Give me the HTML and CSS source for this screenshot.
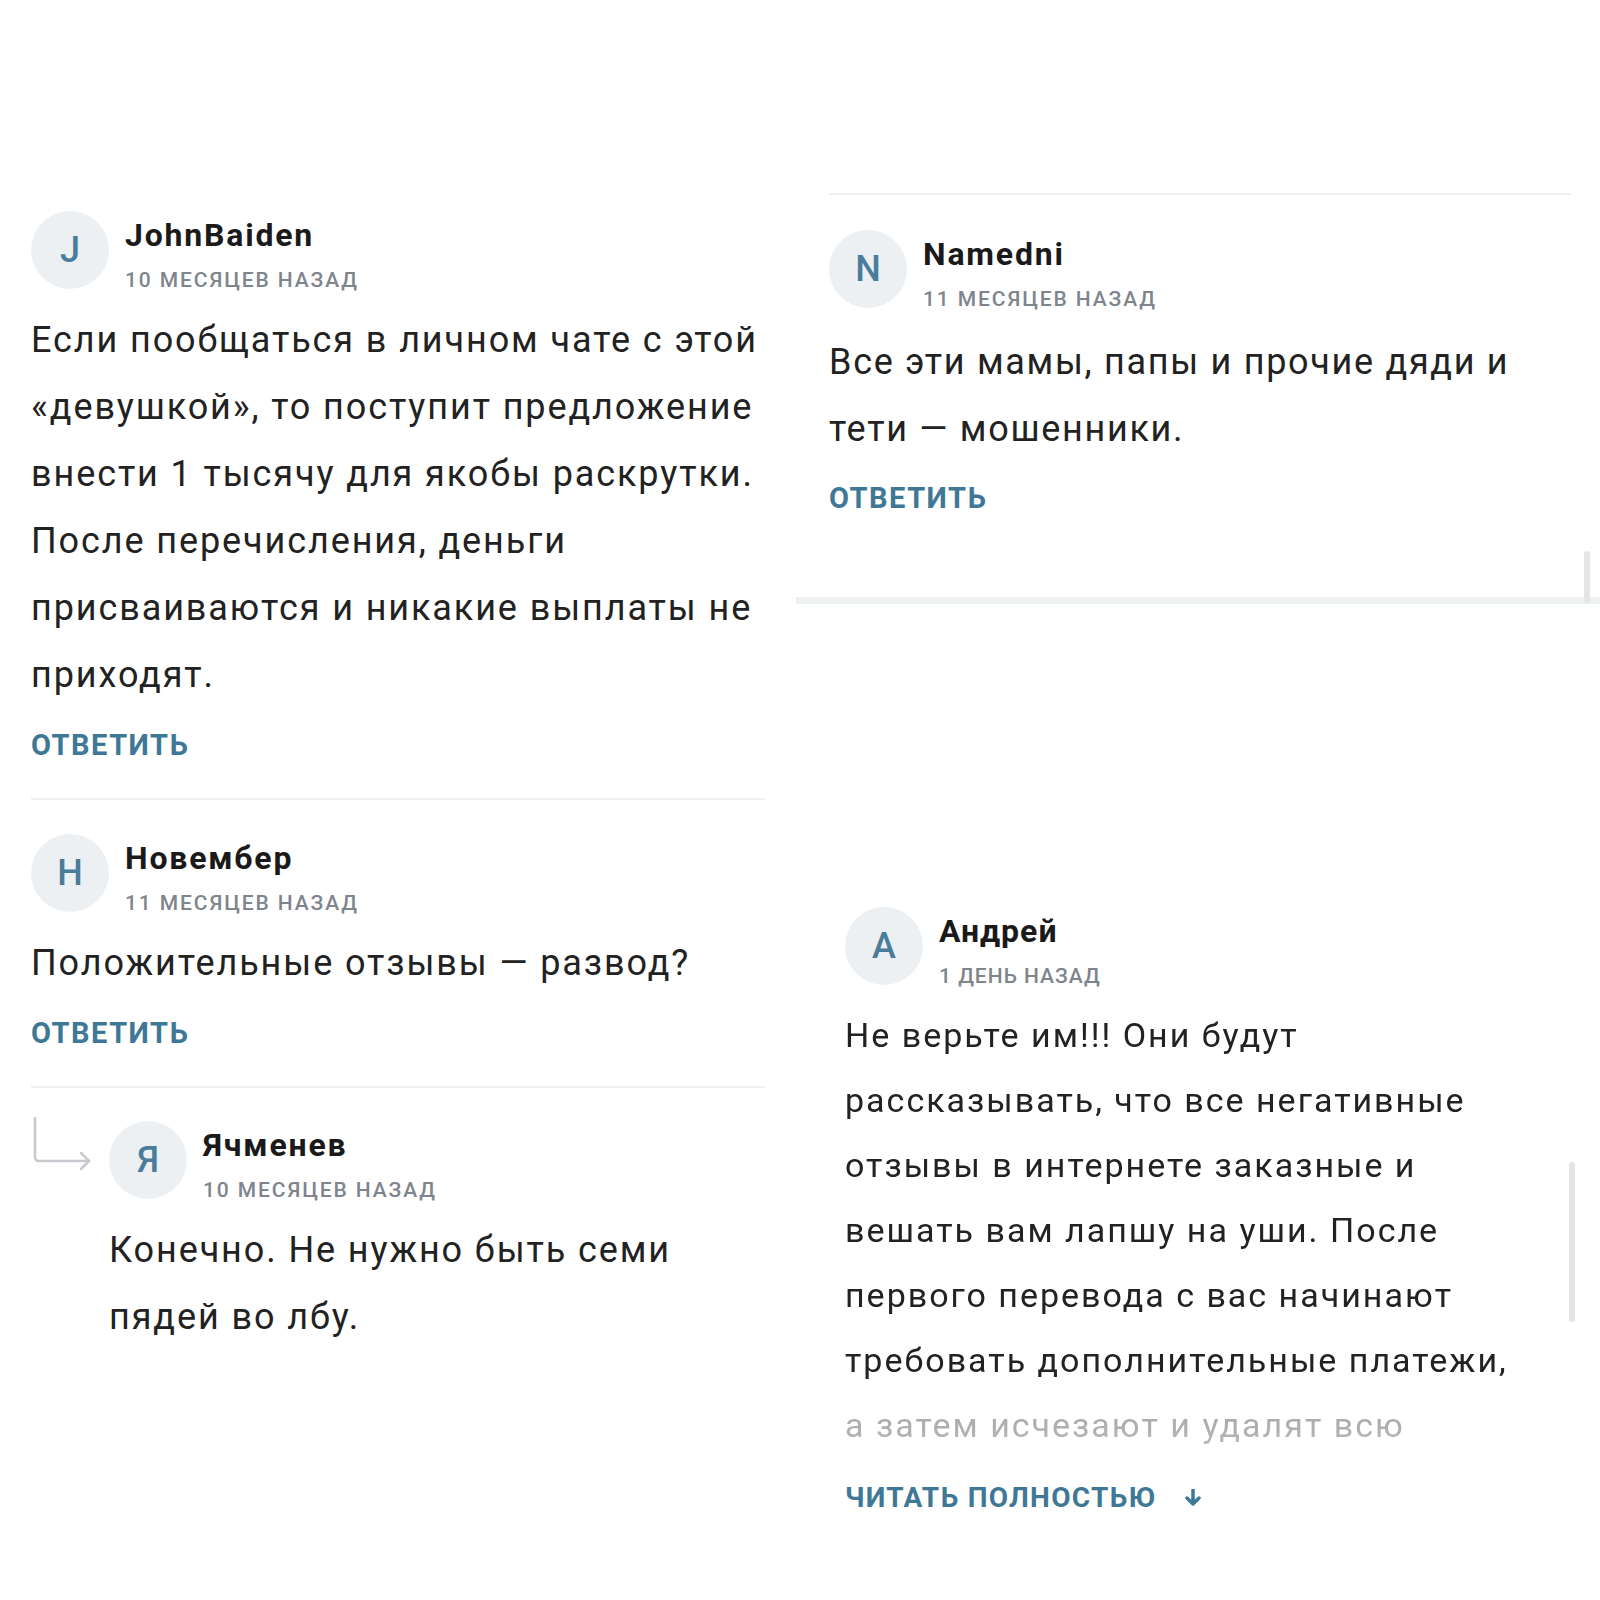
FILE: index.html
```html
<!DOCTYPE html>
<html lang="ru">
<head>
    <meta charset="UTF-8">
    <title>Комментарии</title>
    <link rel="stylesheet" href="styles.css">
</head>
<body>
<div class="board">
    <div class="column-left">
        <div class="comment first">
            <div class="comment-head">
                <div class="avatar">J</div>
                <div class="meta">
                    <div class="name">JohnBaiden</div>
                    <div class="date">10 месяцев назад</div>
                </div>
            </div>
            <p class="comment-text">Если пообщаться в личном чате с этой «девушкой», то поступит предложение внести 1 тысячу для якобы раскрутки. После перечисления, деньги присваиваются и никакие выплаты не приходят.</p>
            <div class="reply-link">Ответить</div>
        </div>

        <div class="comment">
            <div class="comment-head">
                <div class="avatar">Н</div>
                <div class="meta">
                    <div class="name">Новембер</div>
                    <div class="date">11 месяцев назад</div>
                </div>
            </div>
            <p class="comment-text">Положительные отзывы — развод?</p>
            <div class="reply-link">Ответить</div>
        </div>

        <div class="comment answer">
            <svg class="answer-arrow" width="62" height="58" viewBox="0 0 62 58">
                <path d="M3 2 V41 Q3 45 7 45 H57" fill="none" stroke="#c6cacf" stroke-width="2.5" stroke-linecap="round"/>
                <path d="M49 37 L57 45 L49 53" fill="none" stroke="#c6cacf" stroke-width="2.5" stroke-linecap="round" stroke-linejoin="round"/>
            </svg>
            <div>
                <div class="comment-head">
                    <div class="avatar">Я</div>
                    <div class="meta">
                        <div class="name">Ячменев</div>
                        <div class="date">10 месяцев назад</div>
                    </div>
                </div>
                <p class="comment-text">Конечно. Не нужно быть семи пядей во лбу.</p>
            </div>
        </div>
    </div>

    <div class="column-right">
        <div class="thread-top">
            <div class="rule"></div>
            <div class="comment">
                <div class="comment-head">
                    <div class="avatar">N</div>
                    <div class="meta">
                        <div class="name">Namedni</div>
                        <div class="date">11 месяцев назад</div>
                    </div>
                </div>
                <p class="comment-text">Все эти мамы, папы и прочие дяди и тети — мошенники.</p>
                <div class="reply-link">Ответить</div>
            </div>
            <div class="scrollbar short"></div>
        </div>

        <div class="thread-bottom">
            <div class="comment">
                <div class="comment-head">
                    <div class="avatar">А</div>
                    <div class="meta">
                        <div class="name">Андрей</div>
                        <div class="date">1 день назад</div>
                    </div>
                </div>
                <p class="comment-text faded">Не верьте им!!! Они будут рассказывать, что все негативные отзывы в интернете заказные и вешать вам лапшу на уши. После первого перевода с вас начинают требовать дополнительные платежи, а затем исчезают и удалят всю</p>
                <div class="reply-link more">Читать полностью
                    <svg width="20" height="18" viewBox="0 0 20 18">
                        <path d="M10 1 V15 M4 9 L10 15 L16 9" fill="none" stroke="#3f7896" stroke-width="3.5" stroke-linecap="round" stroke-linejoin="round"/>
                    </svg>
                </div>
            </div>
            <div class="scrollbar long"></div>
        </div>
    </div>
</div>
</body>
</html>
```

FILE: styles.css
```css
body {
    margin: 0;
    background-color: #fff;
    font-family: Roboto, "Noto Sans", sans-serif;
    color: #1f1f1f;
}
.board {
    display: grid;
    grid-template-columns: 796px 804px;
    width: 1600px;
    height: 1600px;
}
.column-left {
    padding: 211px 31px 0 31px;
}

/* one comment */
.comment {
    padding: 34px 0 35px;
    border-bottom: 2px solid #eef0f2;
}
.comment.first {
    padding-top: 0;
}
.comment-head {
    display: flex;
    gap: 16px;
}
.avatar {
    width: 78px;
    height: 78px;
    flex-shrink: 0;
    border-radius: 50%;
    background-color: #edf0f3;
    color: #4a7c9b;
    font-size: 36px;
    font-weight: 500;
    display: flex;
    align-items: center;
    justify-content: center;
}
.meta {
    padding-top: 6px;
}
.name {
    font-size: 32px;
    font-weight: 700;
    line-height: 36px;
    letter-spacing: 1.8px;
    color: #1a1a1a;
}
.date {
    margin-top: 14px;
    font-size: 21px;
    font-weight: 500;
    line-height: 26px;
    letter-spacing: 1.9px;
    text-transform: uppercase;
    color: #7e858d;
}
.comment-text {
    margin: 14px 0 0;
    font-size: 36px;
    line-height: 67px;
    letter-spacing: 1.9px;
    color: #222;
}
.reply-link {
    margin-top: 18px;
    font-size: 29px;
    font-weight: 700;
    line-height: 36px;
    letter-spacing: 1.5px;
    text-transform: uppercase;
    color: #3f7896;
}

/* reply to a comment */
.comment.answer {
    display: grid;
    grid-template-columns: 78px 1fr;
    border-bottom: none;
    padding-top: 33px;
}
.answer-arrow {
    margin: -5px 0 0 1px;
}

/* right column */
.column-right {
    display: flex;
    flex-direction: column;
}
.thread-top {
    position: relative;
    margin-top: 193px;
    height: 404px;
    padding: 0 29px 0 33px;
    border-bottom: 7px solid #eef1f2;
}
.rule {
    border-top: 2px solid #eef0f2;
}
.thread-top .comment {
    padding-top: 35px;
    border-bottom: none;
}
.thread-top .comment-text {
    margin-top: 17px;
    letter-spacing: 1.7px;
}
.thread-top .reply-link {
    margin-top: 17px;
}
.thread-bottom {
    position: relative;
    margin-top: 303px;
    padding: 0 0 0 49px;
}
.thread-bottom .comment {
    width: 680px;
    padding: 0;
    border-bottom: none;
}
.thread-bottom .name {
    letter-spacing: 1px;
}
.thread-bottom .date {
    letter-spacing: 1px;
}
.thread-bottom .comment-text {
    font-size: 34px;
    line-height: 65px;
    letter-spacing: 2px;
}
.comment-text.faded {
    -webkit-mask-image: linear-gradient(to bottom, #000 0, #000 calc(100% - 70px), rgba(0, 0, 0, 0.4) calc(100% - 50px), rgba(0, 0, 0, 0.3) 100%);
    mask-image: linear-gradient(to bottom, #000 0, #000 calc(100% - 70px), rgba(0, 0, 0, 0.4) calc(100% - 50px), rgba(0, 0, 0, 0.3) 100%);
}
.reply-link.more {
    margin-top: 22px;
    font-size: 28px;
    letter-spacing: 1.3px;
    display: flex;
    align-items: center;
    gap: 27px;
}
.scrollbar {
    position: absolute;
    width: 6px;
    border-radius: 3px;
    background-color: #e4e5e6;
}
.scrollbar.short {
    right: 10px;
    bottom: -6px;
    height: 52px;
}
.scrollbar.long {
    right: 25px;
    top: 255px;
    height: 160px;
}
```
